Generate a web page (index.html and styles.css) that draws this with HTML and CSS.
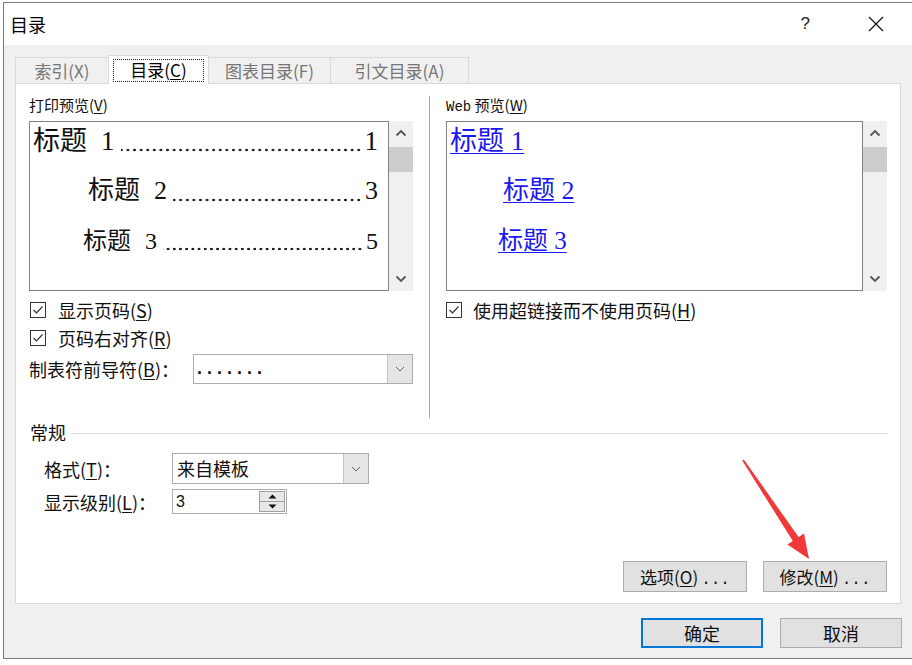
FILE: index.html
```html
<!DOCTYPE html>
<html lang="zh-CN">
<head>
<meta charset="utf-8">
<title>目录</title>
<link rel="stylesheet" href="styles.css">
</head>
<body>
<div class="window">
  <div class="titlebar">
    <span class="title">目录</span>
    <span class="help">?</span>
    <svg class="close" width="16" height="16" viewBox="0 0 16 16"><path d="M1 1L15 15M15 1L1 15" stroke="#111" stroke-width="1.2" fill="none"/></svg>
  </div>
  <div class="client">
    <div class="tabs">
      <div class="tab tab-1">索引(X)</div>
      <div class="tab tab-2 selected"><span class="focus">目录(<u>C</u>)</span></div>
      <div class="tab tab-3">图表目录(F)</div>
      <div class="tab tab-4">引文目录(A)</div>
    </div>
    <div class="panel">
      <div class="top">
        <div class="col col-left">
          <div class="caption">打印预览(<u>V</u>)</div>
          <div class="preview">
            <div class="pv-content">
              <div class="pv-line l1"><span>标题<span class="num">1</span></span><span class="leader"></span><span class="pg">1</span></div>
              <div class="pv-line l2"><span>标题<span class="num">2</span></span><span class="leader"></span><span class="pg">3</span></div>
              <div class="pv-line l3"><span>标题<span class="num">3</span></span><span class="leader"></span><span class="pg">5</span></div>
            </div>
            <div class="scrollbar">
              <div class="sb-btn"><svg width="12" height="8" viewBox="0 0 12 8"><path d="M1.5 6.5L6 2L10.5 6.5" stroke="#555" stroke-width="1.8" fill="none"/></svg></div>
              <div class="sb-thumb"></div>
              <div class="sb-track"></div>
              <div class="sb-btn"><svg width="12" height="8" viewBox="0 0 12 8"><path d="M1.5 1.5L6 6L10.5 1.5" stroke="#555" stroke-width="1.8" fill="none"/></svg></div>
            </div>
          </div>
          <div class="check row-1">
            <span class="cb"><svg width="14" height="14" viewBox="0 0 14 14"><path d="M2.5 7L5.5 10L11.5 3.5" stroke="#333" stroke-width="1.2" fill="none"/></svg></span>
            <span>显示页码(<u>S</u>)</span>
          </div>
          <div class="check row-2">
            <span class="cb"><svg width="14" height="14" viewBox="0 0 14 14"><path d="M2.5 7L5.5 10L11.5 3.5" stroke="#333" stroke-width="1.2" fill="none"/></svg></span>
            <span>页码右对齐(<u>R</u>)</span>
          </div>
          <div class="leader-row">
            <span>制表符前导符(<u>B</u>)：</span>
            <div class="combo combo-leader">
              <span class="combo-text dots">.......</span>
              <span class="combo-btn"><svg width="10" height="6" viewBox="0 0 10 6"><path d="M1 1L5 5L9 1" stroke="#666" stroke-width="1" fill="none"/></svg></span>
            </div>
          </div>
        </div>
        <div class="vdivider"></div>
        <div class="col col-right">
          <div class="caption"><span class="mono">Web</span> 预览(<u>W</u>)</div>
          <div class="preview preview-web">
            <div class="pv-content">
              <div class="wv-line l1"><a>标题 1</a></div>
              <div class="wv-line l2"><a>标题 2</a></div>
              <div class="wv-line l3"><a>标题 3</a></div>
            </div>
            <div class="scrollbar">
              <div class="sb-btn"><svg width="12" height="8" viewBox="0 0 12 8"><path d="M1.5 6.5L6 2L10.5 6.5" stroke="#555" stroke-width="1.8" fill="none"/></svg></div>
              <div class="sb-thumb"></div>
              <div class="sb-track"></div>
              <div class="sb-btn"><svg width="12" height="8" viewBox="0 0 12 8"><path d="M1.5 1.5L6 6L10.5 1.5" stroke="#555" stroke-width="1.8" fill="none"/></svg></div>
            </div>
          </div>
          <div class="check row-1 check-right">
            <span class="cb"><svg width="14" height="14" viewBox="0 0 14 14"><path d="M2.5 7L5.5 10L11.5 3.5" stroke="#333" stroke-width="1.2" fill="none"/></svg></span>
            <span>使用超链接而不使用页码(<u>H</u>)</span>
          </div>
        </div>
      </div>
      <div class="general">
        <div class="group-head"><span>常规</span><span class="group-line"></span></div>
        <div class="form-row row-format">
          <span class="form-label">格式(<u>T</u>)：</span>
          <div class="combo combo-format">
            <span class="combo-text">来自模板</span>
            <span class="combo-btn"><svg width="10" height="6" viewBox="0 0 10 6"><path d="M1 1L5 5L9 1" stroke="#666" stroke-width="1" fill="none"/></svg></span>
          </div>
        </div>
        <div class="form-row row-level">
          <span class="form-label">显示级别(<u>L</u>)：</span>
          <div class="spin">
            <span class="spin-text">3</span>
            <span class="spin-btns">
              <span class="spin-btn"><svg width="9" height="5" viewBox="0 0 9 5"><path d="M0.5 4.5L4.5 0.5L8.5 4.5Z" fill="#111"/></svg></span>
              <span class="spin-btn"><svg width="9" height="5" viewBox="0 0 9 5"><path d="M0.5 0.5L4.5 4.5L8.5 0.5Z" fill="#111"/></svg></span>
            </span>
          </div>
        </div>
      </div>
      <div class="panel-buttons">
        <button class="btn">选项(<u>O</u>)<span class="ell">...</span></button>
        <button class="btn">修改(<u>M</u>)<span class="ell">...</span></button>
      </div>
    </div>
    <div class="dialog-buttons">
      <button class="btn btn-default">确定</button>
      <button class="btn">取消</button>
    </div>
  </div>
</div>
<svg class="annotation" width="912" height="665" viewBox="0 0 912 665">
  <polygon points="743.8,459.4 798.6,537.1 804.0,533.5 809,559 787.4,544.5 792.8,540.9 742.2,460.6" fill="#f03a3a"/>
</svg>
</body>
</html>
```

FILE: styles.css
```css
* { box-sizing: border-box; }
html, body { margin: 0; padding: 0; }
body {
  width: 912px;
  height: 665px;
  overflow: hidden;
  background: #ffffff;
  font-family: "Noto Sans CJK SC", "Noto Sans", sans-serif;
  color: #111;
  position: relative;
}
u { text-decoration: underline; text-underline-offset: 2px; text-decoration-thickness: 1px; }

.window {
  margin: 2px 0 0 3px;
  width: 909px;
  height: 657px;
  border: 1px solid #7a7a7a;
  border-right: none;
  background: #f0f0f0;
  display: flex;
  flex-direction: column;
}

.titlebar {
  height: 42px;
  background: #fff;
  display: flex;
  align-items: center;
  padding-left: 6px;
  flex: none;
}
.title { font-size: 18px; line-height: 42px; color: #000; }
.help { margin-left: auto; font-size: 17px; line-height: 42px; margin-right: 58px; color: #222; font-family: "Liberation Sans", sans-serif; }
.close { margin-right: 28px; }

.client {
  flex: 1;
  display: flex;
  flex-direction: column;
  padding: 10px 10px 10px 11px;
}

.tabs {
  display: flex;
  align-items: flex-end;
  height: 29px;
  flex: none;
}
.tab {
  height: 27px;
  border: 1px solid #d9d9d9;
  border-bottom: none;
  background: #f0f0f0;
  color: #767676;
  font-size: 17px;
  line-height: 26px;
  text-align: center;
  margin-right: -1px;
}
.tab-1 { width: 94px; }
.tab-2 { width: 101px; }
.tab-3 { width: 123px; }
.tab-4 { width: 139px; }
.tab.selected {
  height: 29px;
  background: #fff;
  color: #000;
  position: relative;
  z-index: 1;
  padding: 3px 4px 2px 4px;
  line-height: 22px;
}
.focus {
  display: block;
  height: 23px;
  outline: 1px dotted #222;
  outline-offset: -1px;
  line-height: 22px;
}

.panel {
  margin-top: -1px;
  width: 886px;
  height: 521px;
  background: #fff;
  border: 1px solid #d9d9d9;
  display: flex;
  flex-direction: column;
  flex: none;
}

.top {
  display: flex;
  height: 334px;
  padding: 12px 0 0 13px;
  flex: none;
}
.col-left { width: 384px; display: flex; flex-direction: column; }
.col-right { width: 441px; display: flex; flex-direction: column; }
.vdivider { width: 1px; background: #a8a8a8; margin: 0 16px; align-self: stretch; }

.caption { font-size: 15px; line-height: 18px; height: 18px; color: #111; }
.mono { font-family: "Liberation Mono", monospace; font-size: 14px; }

.preview { display: flex; height: 170px; margin-top: 7px; }
.pv-content {
  flex: 1;
  border: 1px solid #828282;
  background: #fff;
  overflow: hidden;
}
.pv-line {
  display: flex;
  height: 50px;
  line-height: 50px;
  white-space: nowrap;
  font-family: "Liberation Serif", "Noto Sans CJK SC", serif;
  color: #111;
  padding-right: 10px;
}
.pv-line.l1 { font-size: 27px; padding-left: 3px; margin-top: -6px; }
.pv-line.l2 { font-size: 26px; padding-left: 58px; }
.pv-line.l3 { font-size: 24px; padding-left: 53px; }
.num { margin-left: 14px; }
.leader {
  flex: 1;
  margin: 0 3px 0 6px;
  background-image: radial-gradient(circle at center, #1a1a1a 0, #1a1a1a 1px, transparent 1.6px);
  background-size: 6.6px 4px;
  background-repeat: repeat-x;
  background-position: right 0 top 32px;
}
.pv-line.l3 .leader { background-position: right 0 top 31px; background-size: 6.2px 4px; }

.wv-line {
  height: 50px;
  line-height: 50px;
  white-space: pre;
  font-family: "Liberation Serif", "Noto Sans CJK SC", serif;
}
.wv-line a { color: #1a1af0; text-decoration: underline; text-underline-offset: 3px; text-decoration-thickness: 1px; }
.wv-line.l1 { font-size: 27px; padding-left: 3px; margin-top: -6px; }
.wv-line.l2 { font-size: 26px; padding-left: 56px; }
.wv-line.l3 { font-size: 25px; padding-left: 51px; }

.scrollbar {
  width: 24px;
  background: #f0f0f0;
  display: flex;
  flex-direction: column;
}
.sb-btn { height: 24px; display: flex; align-items: center; justify-content: center; flex: none; }
.sb-thumb { height: 25px; margin-top: 2px; background: #cdcdcd; flex: none; }
.sb-track { flex: 1; }

.check {
  display: flex;
  align-items: center;
  height: 20px;
  font-size: 18px;
  line-height: 20px;
  color: #111;
}
.check.row-1 { margin-top: 9px; }
.check.row-2 { margin-top: 8px; }
.cb {
  width: 16px;
  height: 16px;
  border: 1px solid #333;
  background: #fff;
  margin: 0 12px 0 1px;
  display: flex;
  align-items: center;
  justify-content: center;
  flex: none;
}
.check-right .cb { margin-left: 0; margin-right: 11px; }

.leader-row {
  display: flex;
  align-items: center;
  margin-top: 6px;
  height: 30px;
  font-size: 18px;
}
.combo {
  display: flex;
  border: 1px solid #adadad;
  background: #fff;
}
.combo-leader { margin-left: auto; width: 220px; height: 30px; }
.combo-text { flex: 1; padding-left: 4px; line-height: 28px; font-size: 18px; color: #111; }
.combo-text.dots { letter-spacing: 5px; font-family: "Liberation Sans", sans-serif; font-weight: bold; font-size: 18px; line-height: 26px; padding-left: 3px; }
.combo-btn {
  width: 25px;
  background: #e5e5e5;
  border-left: 1px solid #c6c6c6;
  display: flex;
  align-items: center;
  justify-content: center;
}

.general { padding: 4px 12px 0 14px; flex: none; }
.group-head { display: flex; align-items: center; height: 20px; font-size: 18px; line-height: 20px; }
.group-line { flex: 1; height: 1px; background: #dcdcdc; margin: 2px 0 0 5px; }
.form-row { display: flex; align-items: center; padding-left: 14px; font-size: 18px; }
.row-format { margin-top: 11px; height: 31px; }
.row-level { margin-top: 5px; height: 25px; }
.form-label { width: 128px; flex: none; }
.combo-format { width: 197px; height: 31px; }
.combo-format .combo-text { line-height: 29px; }
.spin {
  width: 115px;
  height: 25px;
  border: 1px solid #adadad;
  display: flex;
  background: #fff;
}
.spin-text { flex: 1; padding-left: 3px; font-size: 16px; line-height: 23px; font-family: "Liberation Sans", sans-serif; }
.spin-btns { width: 27px; display: flex; flex-direction: column; padding: 1px 1px 1px 0; }
.spin-btn {
  flex: 1;
  background: #e8e8e8;
  border: 1px solid #a0a0a0;
  display: flex;
  align-items: center;
  justify-content: center;
}
.spin-btn + .spin-btn { border-top: none; }

.btn {
  width: 124px;
  height: 31px;
  background: #e1e1e1;
  border: 1px solid #adadad;
  font-family: "Noto Sans CJK SC", sans-serif;
  font-size: 17px;
  color: #111;
  padding: 0;
  line-height: 29px;
}
.ell { letter-spacing: 0; margin-left: 3px; font-family: "Liberation Mono", monospace; font-size: 16px; }

.panel-buttons {
  margin-top: auto;
  display: flex;
  justify-content: flex-end;
  gap: 16px;
  padding: 0 13px 11px 0;
}

.dialog-buttons {
  margin-top: 14px;
  display: flex;
  justify-content: flex-end;
  gap: 17px;
}
.dialog-buttons .btn { width: 122px; height: 30px; font-size: 18px; line-height: 27px; }
.btn-default { border: 1px solid #0078d7; box-shadow: inset 0 0 0 1px #0078d7; }

.annotation { position: absolute; left: 0; top: 0; pointer-events: none; }
```
